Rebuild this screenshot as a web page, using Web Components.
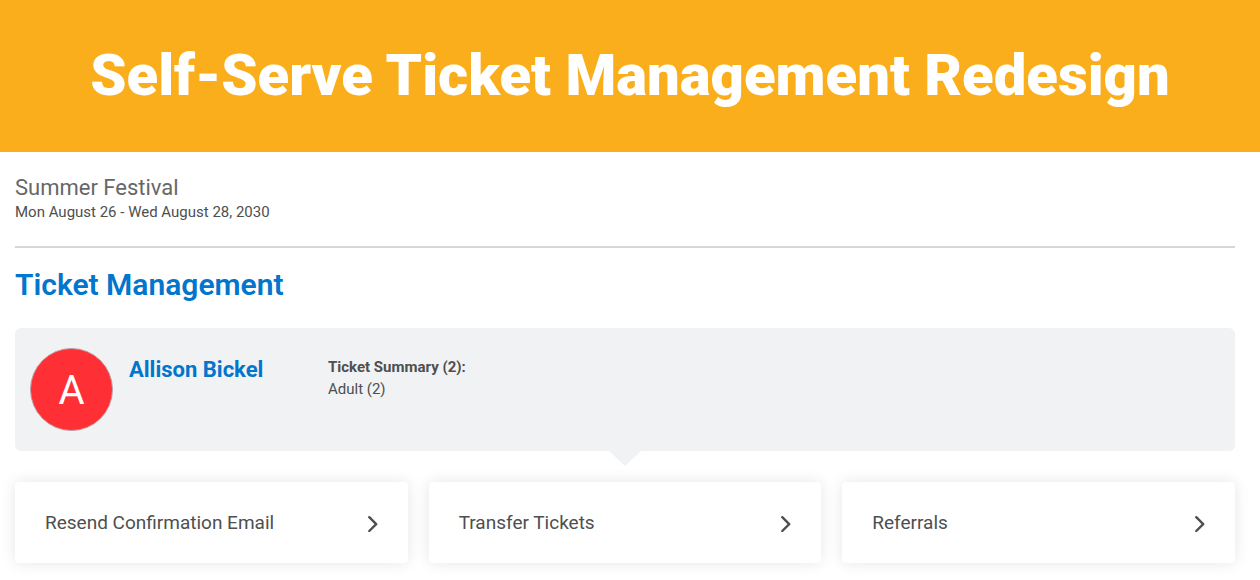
<!DOCTYPE html>
<html lang="en">
<head>
<meta charset="utf-8">
<meta name="viewport" content="width=device-width, initial-scale=1">
<title>Ticket Management</title>
<style>
body {
    margin:0;
    background:#fff;
    color:#4d4f50;
    font-family:Roboto,"Liberation Sans",sans-serif;
    --brand:#0275cc;
    --panel:#f1f2f4;
}
main {
    padding:23px 25px 16px 15px;
}
h2 {
    margin:0 0 25px;
    color:var(--brand);
    font-size:30px;line-height:36px;font-weight:600;
}
nav {
    display:grid;
    grid-template-columns:repeat(3,1fr);
    gap:21px;
    margin-top:31px;
}
</style>
</head>
<body>
<page-banner>Self-Serve Ticket Management Redesign</page-banner>
<main>
    <event-header>
        Summer Festival
        <span slot="dates">Mon August 26 - Wed August 28, 2030</span>
    </event-header>
    <h2>Ticket Management</h2>
    <ticket-holder initial="A">
        Allison Bickel
        <span slot="summary">Ticket Summary (2):</span>
        <span slot="tickets">Adult (2)</span>
    </ticket-holder>
    <nav aria-label="Ticket actions">
        <action-card href="#resend">Resend Confirmation Email</action-card>
        <action-card href="#transfer">Transfer Tickets</action-card>
        <action-card href="#referrals">Referrals</action-card>
    </nav>
</main>
<script>
customElements.define('page-banner', class extends HTMLElement {
    constructor() {
        super();
        this.attachShadow({ mode: 'open' }).innerHTML = `
        <style>
        :host {
            display:block;
            padding:39px 24px 41px;
            background:#fbae1c;
            color:#fff;
            text-align:center;
        }
        h1 {
            margin:0;
            font-size:58px;line-height:72px;font-weight:900;
        }
        </style>
        <h1><slot></slot></h1>`;
    }
});
customElements.define('event-header', class extends HTMLElement {
    constructor() {
        super();
        this.attachShadow({ mode: 'open' }).innerHTML = `
        <style>
        :host {
            display:block;
            padding-bottom:23px;
            margin-bottom:19px;
            border-bottom:2px solid #d4d8db;
        }
        h3,p {
            margin:0;
        }
        h3 {
            color:#666768;
            font-size:22px;line-height:26px;font-weight:400;
        }
        p {
            font-size:15px;line-height:22px;
        }
        </style>
        <h3><slot></slot></h3>
        <p><slot name="dates"></slot></p>`;
    }
});
customElements.define('ticket-holder', class extends HTMLElement {
    constructor() {
        super();
        this.attachShadow({ mode: 'open' }).innerHTML = `
        <style>
        :host {
            display:grid;
            grid-template-columns:83px 183px 1fr;
            column-gap:16px;
            position:relative;
            padding:20px 15px;
            border-radius:6px;
            background:var(--panel);
        }
        /* pointer to the actions below */
        :host::after {
            content:'';
            position:absolute;
            left:50%;top:100%;
            margin-left:-16px;
            border:16px solid transparent;
            border-top:15px solid var(--panel);
            border-bottom:0;
        }
        .avatar {
            display:grid;
            place-items:center;
            box-sizing:border-box;
            width:83px;height:83px;
            padding-top:2px;
            border:1px solid #b9a3a6;
            border-radius:50%;
            background:#ff3035;
            color:#fff;
            font-size:40px;line-height:40px;
        }
        h3,p {
            margin:0;
        }
        h3,.summary {
            padding-top:8px;
        }
        h3 {
            color:var(--brand);
            font-size:22px;line-height:28px;font-weight:700;
        }
        .summary {
            font-size:15px;line-height:22px;
        }
        .total {
            font-weight:700;
        }
        </style>
        <div class="avatar"></div>
        <h3><slot></slot></h3>
        <div class="summary">
            <p class="total"><slot name="summary"></slot></p>
            <p><slot name="tickets"></slot></p>
        </div>`;
    }
    connectedCallback() {
        this.shadowRoot.querySelector('.avatar').textContent = this.getAttribute('initial');
    }
});
customElements.define('action-card', class extends HTMLElement {
    constructor() {
        super();
        this.attachShadow({ mode: 'open' }).innerHTML = `
        <style>
        :host {
            display:block;
        }
        a {
            display:flex;
            align-items:center;justify-content:space-between;
            padding:28px 30px;
            border-radius:4px;
            background:#fff;
            box-shadow:0 0 15px rgba(0,0,0,.1);
            color:inherit;
            font-size:19px;line-height:25px;
            text-decoration:none;
        }
        svg {
            flex:none;
            width:10px;height:18px;
        }
        </style>
        <a>
            <slot></slot>
            <svg viewBox="0 0 10 18" fill="none" stroke="currentColor" stroke-width="2.4" stroke-linecap="round" stroke-linejoin="round" aria-hidden="true"><path d="M1.3 3.2 8.2 10.2 1.3 17"/></svg>
        </a>`;
    }
    connectedCallback() {
        this.shadowRoot.querySelector('a').href = this.getAttribute('href');
    }
});
</script>
</body>
</html>
